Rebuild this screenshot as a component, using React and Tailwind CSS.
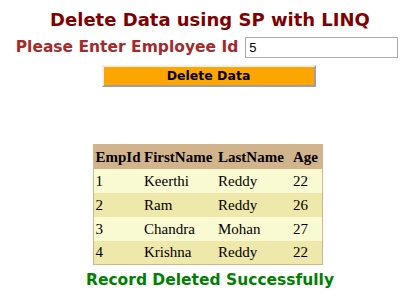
export default function App() {
  const rows = [
    { id: 1, first: 'Keerthi', last: 'Reddy', age: 22 },
    { id: 2, first: 'Ram', last: 'Reddy', age: 26 },
    { id: 3, first: 'Chandra', last: 'Mohan', age: 27 },
    { id: 4, first: 'Krishna', last: 'Reddy', age: 22 },
  ];

  return (
    <div className="w-[420px] h-[297px] bg-white overflow-hidden flex flex-col items-center">
      {/* Title */}
      <h1 className="mt-[9px] text-[18px] leading-[22px] font-bold text-[#800000] font-['DejaVu_Sans',Verdana,sans-serif]">
        Delete Data using SP with LINQ
      </h1>

      {/* Input row */}
      <div className="mt-[5px] mr-[6px] flex items-center gap-[7px]">
        <label className="text-[15.5px] font-bold text-[#A52A2A] font-['DejaVu_Sans',Verdana,sans-serif]">
          Please Enter Employee Id
        </label>
        <input
          type="text"
          defaultValue="5"
          className="w-[153px] h-[21px] border border-[#a9a9a9] px-[3px] text-[13px] text-black font-['Liberation_Sans',Arial,sans-serif] outline-none"
        />
      </div>

      {/* Button */}
      <button className="mt-[6px] mr-[3px] w-[214px] h-[22px] bg-[#FFA500] border-2 border-t-[#f0f0f0] border-l-[#f0f0f0] border-r-[#a0a0a0] border-b-[#a0a0a0] text-[12.5px] font-bold text-black font-['DejaVu_Sans',Verdana,sans-serif]">
        Delete Data
      </button>

      {/* Table */}
      <table className="mt-[57px] mr-[5px] w-[229px] table-fixed border-collapse border border-[#D2B48C] font-['Liberation_Serif','Times_New_Roman',serif] text-[15px] text-black">
        <thead>
          <tr className="bg-[#D2B48C] h-[24px]">
            <th className="text-left font-bold pl-[2px] pr-0 w-[50px] whitespace-nowrap">EmpId</th>
            <th className="text-left font-bold pl-[1px] pr-0 w-[74px] whitespace-nowrap">FirstName</th>
            <th className="text-left font-bold pl-[1px] pr-0 w-[75px] whitespace-nowrap">LastName</th>
            <th className="text-left font-bold pl-[1px] pr-0 w-[30px] whitespace-nowrap">Age</th>
          </tr>
        </thead>
        <tbody>
          {rows.map((r, i) => (
            <tr key={r.id} className={`h-[24px] ${i % 2 === 0 ? 'bg-[#FAFAD2]' : 'bg-[#EEE8AA]'}`}>
              <td className="pl-[2px]">{r.id}</td>
              <td className="pl-[1px]">{r.first}</td>
              <td className="pl-[1px]">{r.last}</td>
              <td className="pl-[1px]">{r.age}</td>
            </tr>
          ))}
        </tbody>
      </table>

      {/* Status */}
      <p className="mt-[4px] text-[15.5px] font-bold text-[#008000] font-['DejaVu_Sans',Verdana,sans-serif]">
        Record Deleted Successfully
      </p>
    </div>
  );
}
